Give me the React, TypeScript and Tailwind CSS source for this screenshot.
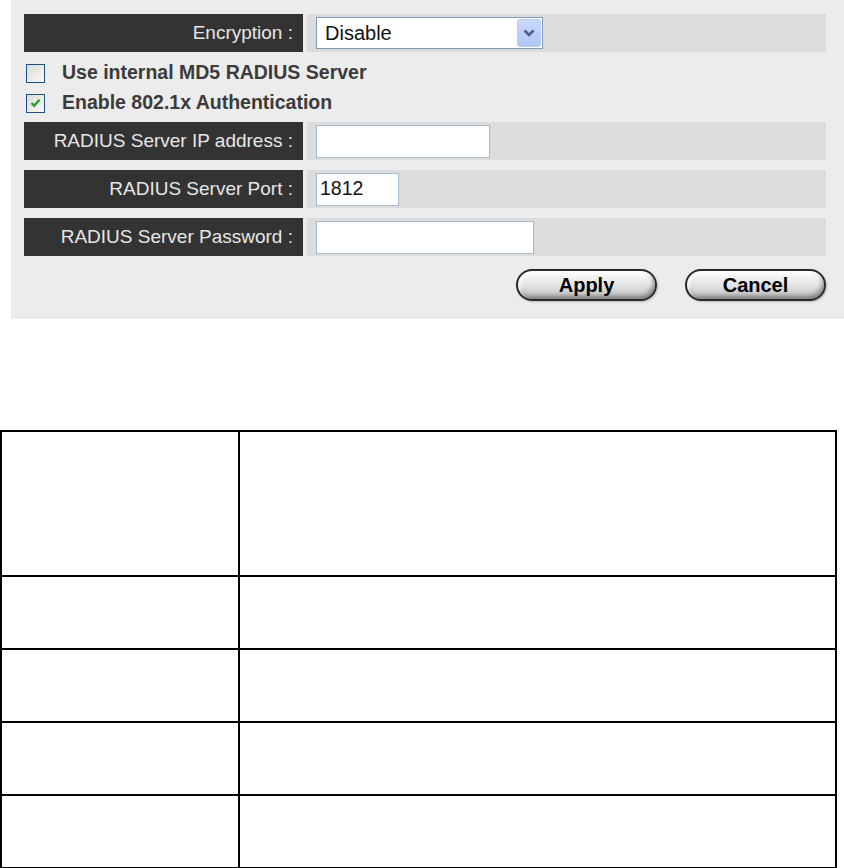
export default function App() {
  const font = { fontFamily: '"Liberation Sans", Arial, sans-serif' };

  return (
    <div className="w-[844px] h-[868px] bg-white" style={font}>
      {/* Settings panel */}
      <div className="ml-[11px] h-[319px] bg-[#ececec] pt-[14px] pl-[13px] pr-[18px]">
        <FieldRow label="Encryption :">
          <div className="flex h-[32px] w-[227px] items-center border border-[#7f9db9] bg-white pl-[8px] pr-[1px]">
            <span className="flex-1 text-[20px] text-[#111]">Disable</span>
            <span className="flex h-[28px] w-[24px] items-center justify-center rounded-[3px] bg-gradient-to-b from-[#c9d8fc] to-[#b1c6f6] border border-[#b9cdf5]">
              <svg width="12" height="8" viewBox="0 0 12 8">
                <path d="M1.5 1.5 L6 6 L10.5 1.5" fill="none" stroke="#4d6185" strokeWidth="2.6" />
              </svg>
            </span>
          </div>
        </FieldRow>

        <div className="mt-[6px] flex h-[30px] items-center">
          <CheckBox />
          <span className="ml-[17px] text-[19.5px] font-bold text-[#3b3b3b]">Use internal MD5 RADIUS Server</span>
        </div>
        <div className="flex h-[30px] items-center">
          <CheckBox checked />
          <span className="ml-[17px] text-[19.5px] font-bold text-[#3b3b3b]">Enable 802.1x Authentication</span>
        </div>

        <div className="mt-[4px] flex flex-col gap-[10px]">
          <FieldRow label="RADIUS Server IP address :">
            <TextBox width="w-[174px]" />
          </FieldRow>
          <FieldRow label="RADIUS Server Port :">
            <TextBox width="w-[83px]" value="1812" />
          </FieldRow>
          <FieldRow label="RADIUS Server Password :">
            <TextBox width="w-[218px]" />
          </FieldRow>
        </div>

        <div className="mt-[13px] flex justify-end gap-[28px]">
          <PillButton label="Apply" />
          <PillButton label="Cancel" />
        </div>
      </div>

      {/* Description table */}
      <table className="mt-[111px] w-[837px] border-collapse">
        <tbody>
          <tr className="h-[145px]">
            <td className="w-[238px] border-2 border-black"></td>
            <td className="border-2 border-black"></td>
          </tr>
          {[0, 1, 2, 3].map((i) => (
            <tr key={i} className="h-[73px]">
              <td className="w-[238px] border-2 border-black"></td>
              <td className="border-2 border-black"></td>
            </tr>
          ))}
        </tbody>
      </table>
    </div>
  );
}

function FieldRow({ label, children }: { label: string; children: React.ReactNode }) {
  return (
    <div className="flex h-[38px] gap-[4px]">
      <div className="flex w-[279px] items-center justify-end bg-[#333333] pr-[10px] text-[19px] text-[#e6e6e6]">
        {label}
      </div>
      <div className="flex flex-1 items-center bg-[#dcdcdc] pl-[9px]">{children}</div>
    </div>
  );
}

function TextBox({ width, value }: { width: string; value?: string }) {
  return (
    <div className={`flex h-[33px] items-center border border-[#a5b9d1] bg-white pl-[3px] text-[19.5px] text-[#111] ${width}`}>
      {value}
    </div>
  );
}

function CheckBox({ checked }: { checked?: boolean }) {
  return (
    <span className="ml-[2px] flex h-[19px] w-[19px] items-center justify-center border border-[#1c5180] bg-gradient-to-br from-[#dcdcd6] to-[#f8f8f6]">
      {checked && (
        <svg width="11" height="10" viewBox="0 0 11 10">
          <path d="M1.5 5 L4.2 7.8 L9.5 1.8" fill="none" stroke="#21a121" strokeWidth="2.4" />
        </svg>
      )}
    </span>
  );
}

function PillButton({ label }: { label: string }) {
  return (
    <button className="flex h-[32px] w-[141px] items-center justify-center rounded-full border-2 border-[#2a2a2a] bg-gradient-to-b from-[#fdfdfd] via-[#e4e4e4] to-[#bdbdbd] text-[20px] font-bold text-black shadow-[inset_2px_2px_3px_rgba(255,255,255,0.9),inset_-2px_-3px_4px_rgba(0,0,0,0.35),1px_1px_2px_rgba(120,90,60,0.35)]">
      {label}
    </button>
  );
}
